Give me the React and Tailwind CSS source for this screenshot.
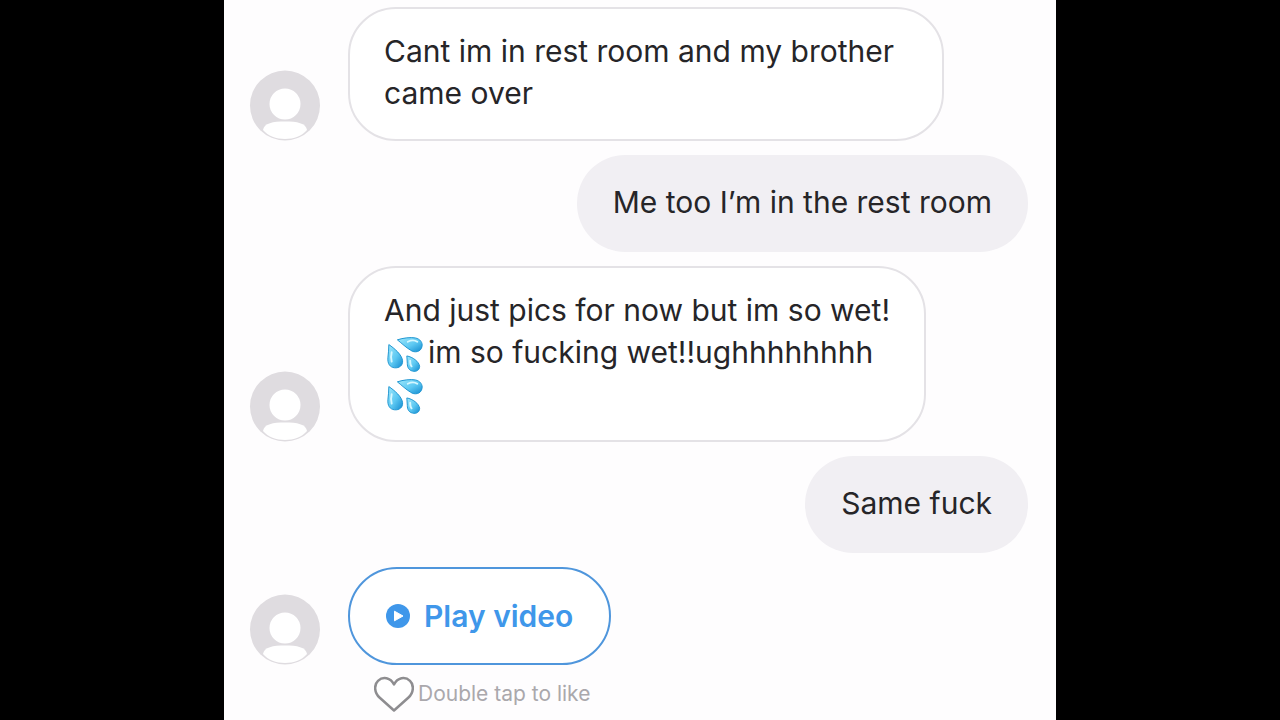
import React from 'react';

const Avatar = () => (
    <svg viewBox="0 0 72 72" className="w-[72px] h-[72px] shrink-0" aria-hidden="true">
        <circle cx="36" cy="36.500" r="35" fill="#dfdce0" />
        <circle cx="36" cy="35" r="15.500" fill="#fff" />
        <path d="M14 61C15 54 24 52.500 36 52.500S57 54 58 61C53 67 45 70 36 70S19 67 14 61Z" fill="#fff" />
    </svg>
);

const Droplets = () => (
    <svg viewBox="0 0 40 38" className="inline-block w-10 h-9 mr-1 align-middle" role="img" aria-label="sweat droplets">
        <defs>
            <linearGradient id="drop" x1="0" y1="0" x2="1" y2="1">
                <stop offset="0" stopColor="#9fe8fb" />
                <stop offset="0.55" stopColor="#5cc8f2" />
                <stop offset="1" stopColor="#128bd0" />
            </linearGradient>
        </defs>
        <g fill="url(#drop)" stroke="#1c93cf" strokeWidth="1">
            <path d="M13 3C19 1 27 0 32 1C37 2 40 6 39 10C38 16 31 17 27 14C22 11 18 7 13 3Z" />
            <path d="M4 8C10 12 18 19 18.500 25C19 30 15 33 10 32.500C5 32 2.500 28 3 22C3.500 17 4 13 4 8Z" />
            <path d="M23 20C29 21 36 26 36.500 31C36.500 35 33 37 29 36C25 35 23.500 32 23.500 28Z" />
        </g>
        <g fill="none" stroke="#d5f7ff" strokeWidth="2" strokeLinecap="round">
            <path d="M24 5C28 3 31 3 34 5" />
            <path d="M7 16C6 20 6 23 7 26" />
            <path d="M26.500 25C26.500 28 27 30 28 31" />
        </g>
    </svg>
);

const PlayIcon = () => (
    <svg viewBox="0 0 24 24" className="w-6 h-6" aria-hidden="true">
        <circle cx="12" cy="12" r="12" fill="#3f97ea" />
        <path d="M8.500 7.200V16.800L17 12Z" fill="#fff" stroke="#fff" strokeWidth="1" strokeLinejoin="round" />
    </svg>
);

const HeartIcon = () => (
    <svg viewBox="0 0 40 36" className="w-10 h-9" aria-hidden="true">
        <path
            d="M20 34.500L5.500 21.500C0 16.500 0 8.500 4 4.800C9 0 16.500 1.500 20 8.500C23.500 1.500 31 0 36 4.800C40 8.500 40 16.500 34.500 21.500Z"
            fill="#fff"
            stroke="#8e8d90"
            strokeWidth="2.500"
            strokeLinejoin="round"
        />
    </svg>
);

const Received = ({ children }) => (
    <div className="flex items-end gap-[27px]">
        <Avatar />
        {children}
    </div>
);

const ReceivedText = ({ children }) => (
    <Received>
        <p className="max-w-[596px] rounded-[48px] border-2 border-[#e4e2e6] bg-white px-[34px] pt-[21px] pb-[25px]">
            {children}
        </p>
    </Received>
);

const SentText = ({ children }) => (
    <p className="flex min-h-[97px] items-center self-end rounded-[48px] bg-[#f1eff3] px-9 pb-1">{children}</p>
);

const App = () => {
    return (
        <div className="min-h-screen bg-black">
            <main className="mx-auto flex min-h-screen w-[65%] flex-col gap-3.5 bg-[#fefdfe] pl-[25px] pr-7 pt-[7px] font-['Inter',sans-serif] text-[30px] leading-[42px] text-[#262528]">
                <ReceivedText>Cant im in rest room and my brother came over</ReceivedText>

                <SentText>Me too I’m in the rest room</SentText>

                <ReceivedText>
                    And just pics for now but im so wet!
                    <br />
                    <Droplets />
                    im so fucking wet!!ughhhhhhhh
                    <br />
                    <Droplets />
                </ReceivedText>

                <SentText>Same fuck</SentText>

                <div>
                    <Received>
                        <button
                            type="button"
                            className="flex h-[98px] items-center gap-3.5 rounded-[49px] border-2 border-[#4f96dc] bg-white px-9 font-semibold text-[#3f97ea]"
                        >
                            <PlayIcon />
                            Play video
                        </button>
                    </Received>
                    <div className="ml-[125px] mt-[11px] flex items-center gap-1 text-[21px] leading-9 text-[#aaa8ac]">
                        <HeartIcon />
                        Double tap to like
                    </div>
                </div>
            </main>
        </div>
    );
};

export default App;
